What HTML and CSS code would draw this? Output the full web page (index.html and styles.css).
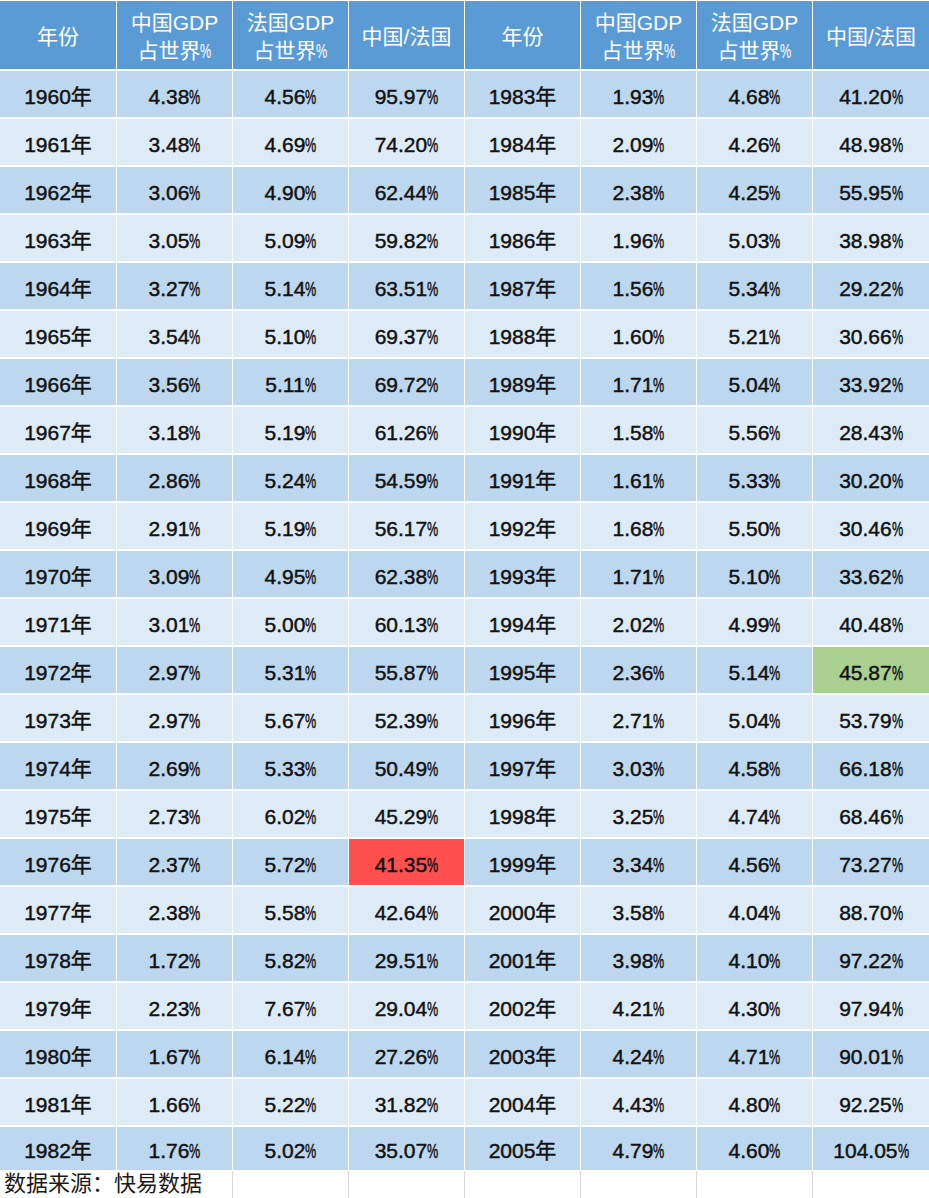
FILE: index.html
```html
<!DOCTYPE html>
<html lang="zh-CN">
<head>
<meta charset="utf-8">
<title>中国与法国GDP占世界比重</title>
<link rel="stylesheet" href="styles.css">
</head>
<body>
<div class="sheet">
  <div class="row head">
    <div class="c">年份</div>
    <div class="c"><span>中国GDP<br>占世界<span class="p">%</span></span></div>
    <div class="c"><span>法国GDP<br>占世界<span class="p">%</span></span></div>
    <div class="c">中国/法国</div>
    <div class="c">年份</div>
    <div class="c"><span>中国GDP<br>占世界<span class="p">%</span></span></div>
    <div class="c"><span>法国GDP<br>占世界<span class="p">%</span></span></div>
    <div class="c">中国/法国</div>
  </div>
  <div class="row dark"><div class="c">1960年</div><div class="c">4.38<span class="p">%</span></div><div class="c">4.56<span class="p">%</span></div><div class="c">95.97<span class="p">%</span></div><div class="c">1983年</div><div class="c">1.93<span class="p">%</span></div><div class="c">4.68<span class="p">%</span></div><div class="c">41.20<span class="p">%</span></div></div>
  <div class="row light"><div class="c">1961年</div><div class="c">3.48<span class="p">%</span></div><div class="c">4.69<span class="p">%</span></div><div class="c">74.20<span class="p">%</span></div><div class="c">1984年</div><div class="c">2.09<span class="p">%</span></div><div class="c">4.26<span class="p">%</span></div><div class="c">48.98<span class="p">%</span></div></div>
  <div class="row dark"><div class="c">1962年</div><div class="c">3.06<span class="p">%</span></div><div class="c">4.90<span class="p">%</span></div><div class="c">62.44<span class="p">%</span></div><div class="c">1985年</div><div class="c">2.38<span class="p">%</span></div><div class="c">4.25<span class="p">%</span></div><div class="c">55.95<span class="p">%</span></div></div>
  <div class="row light"><div class="c">1963年</div><div class="c">3.05<span class="p">%</span></div><div class="c">5.09<span class="p">%</span></div><div class="c">59.82<span class="p">%</span></div><div class="c">1986年</div><div class="c">1.96<span class="p">%</span></div><div class="c">5.03<span class="p">%</span></div><div class="c">38.98<span class="p">%</span></div></div>
  <div class="row dark"><div class="c">1964年</div><div class="c">3.27<span class="p">%</span></div><div class="c">5.14<span class="p">%</span></div><div class="c">63.51<span class="p">%</span></div><div class="c">1987年</div><div class="c">1.56<span class="p">%</span></div><div class="c">5.34<span class="p">%</span></div><div class="c">29.22<span class="p">%</span></div></div>
  <div class="row light"><div class="c">1965年</div><div class="c">3.54<span class="p">%</span></div><div class="c">5.10<span class="p">%</span></div><div class="c">69.37<span class="p">%</span></div><div class="c">1988年</div><div class="c">1.60<span class="p">%</span></div><div class="c">5.21<span class="p">%</span></div><div class="c">30.66<span class="p">%</span></div></div>
  <div class="row dark"><div class="c">1966年</div><div class="c">3.56<span class="p">%</span></div><div class="c">5.11<span class="p">%</span></div><div class="c">69.72<span class="p">%</span></div><div class="c">1989年</div><div class="c">1.71<span class="p">%</span></div><div class="c">5.04<span class="p">%</span></div><div class="c">33.92<span class="p">%</span></div></div>
  <div class="row light"><div class="c">1967年</div><div class="c">3.18<span class="p">%</span></div><div class="c">5.19<span class="p">%</span></div><div class="c">61.26<span class="p">%</span></div><div class="c">1990年</div><div class="c">1.58<span class="p">%</span></div><div class="c">5.56<span class="p">%</span></div><div class="c">28.43<span class="p">%</span></div></div>
  <div class="row dark"><div class="c">1968年</div><div class="c">2.86<span class="p">%</span></div><div class="c">5.24<span class="p">%</span></div><div class="c">54.59<span class="p">%</span></div><div class="c">1991年</div><div class="c">1.61<span class="p">%</span></div><div class="c">5.33<span class="p">%</span></div><div class="c">30.20<span class="p">%</span></div></div>
  <div class="row light"><div class="c">1969年</div><div class="c">2.91<span class="p">%</span></div><div class="c">5.19<span class="p">%</span></div><div class="c">56.17<span class="p">%</span></div><div class="c">1992年</div><div class="c">1.68<span class="p">%</span></div><div class="c">5.50<span class="p">%</span></div><div class="c">30.46<span class="p">%</span></div></div>
  <div class="row dark"><div class="c">1970年</div><div class="c">3.09<span class="p">%</span></div><div class="c">4.95<span class="p">%</span></div><div class="c">62.38<span class="p">%</span></div><div class="c">1993年</div><div class="c">1.71<span class="p">%</span></div><div class="c">5.10<span class="p">%</span></div><div class="c">33.62<span class="p">%</span></div></div>
  <div class="row light"><div class="c">1971年</div><div class="c">3.01<span class="p">%</span></div><div class="c">5.00<span class="p">%</span></div><div class="c">60.13<span class="p">%</span></div><div class="c">1994年</div><div class="c">2.02<span class="p">%</span></div><div class="c">4.99<span class="p">%</span></div><div class="c">40.48<span class="p">%</span></div></div>
  <div class="row dark"><div class="c">1972年</div><div class="c">2.97<span class="p">%</span></div><div class="c">5.31<span class="p">%</span></div><div class="c">55.87<span class="p">%</span></div><div class="c">1995年</div><div class="c">2.36<span class="p">%</span></div><div class="c">5.14<span class="p">%</span></div><div class="c hi-green">45.87<span class="p">%</span></div></div>
  <div class="row light"><div class="c">1973年</div><div class="c">2.97<span class="p">%</span></div><div class="c">5.67<span class="p">%</span></div><div class="c">52.39<span class="p">%</span></div><div class="c">1996年</div><div class="c">2.71<span class="p">%</span></div><div class="c">5.04<span class="p">%</span></div><div class="c">53.79<span class="p">%</span></div></div>
  <div class="row dark"><div class="c">1974年</div><div class="c">2.69<span class="p">%</span></div><div class="c">5.33<span class="p">%</span></div><div class="c">50.49<span class="p">%</span></div><div class="c">1997年</div><div class="c">3.03<span class="p">%</span></div><div class="c">4.58<span class="p">%</span></div><div class="c">66.18<span class="p">%</span></div></div>
  <div class="row light"><div class="c">1975年</div><div class="c">2.73<span class="p">%</span></div><div class="c">6.02<span class="p">%</span></div><div class="c">45.29<span class="p">%</span></div><div class="c">1998年</div><div class="c">3.25<span class="p">%</span></div><div class="c">4.74<span class="p">%</span></div><div class="c">68.46<span class="p">%</span></div></div>
  <div class="row dark"><div class="c">1976年</div><div class="c">2.37<span class="p">%</span></div><div class="c">5.72<span class="p">%</span></div><div class="c hi-red">41.35<span class="p">%</span></div><div class="c">1999年</div><div class="c">3.34<span class="p">%</span></div><div class="c">4.56<span class="p">%</span></div><div class="c">73.27<span class="p">%</span></div></div>
  <div class="row light"><div class="c">1977年</div><div class="c">2.38<span class="p">%</span></div><div class="c">5.58<span class="p">%</span></div><div class="c">42.64<span class="p">%</span></div><div class="c">2000年</div><div class="c">3.58<span class="p">%</span></div><div class="c">4.04<span class="p">%</span></div><div class="c">88.70<span class="p">%</span></div></div>
  <div class="row dark"><div class="c">1978年</div><div class="c">1.72<span class="p">%</span></div><div class="c">5.82<span class="p">%</span></div><div class="c">29.51<span class="p">%</span></div><div class="c">2001年</div><div class="c">3.98<span class="p">%</span></div><div class="c">4.10<span class="p">%</span></div><div class="c">97.22<span class="p">%</span></div></div>
  <div class="row light"><div class="c">1979年</div><div class="c">2.23<span class="p">%</span></div><div class="c">7.67<span class="p">%</span></div><div class="c">29.04<span class="p">%</span></div><div class="c">2002年</div><div class="c">4.21<span class="p">%</span></div><div class="c">4.30<span class="p">%</span></div><div class="c">97.94<span class="p">%</span></div></div>
  <div class="row dark"><div class="c">1980年</div><div class="c">1.67<span class="p">%</span></div><div class="c">6.14<span class="p">%</span></div><div class="c">27.26<span class="p">%</span></div><div class="c">2003年</div><div class="c">4.24<span class="p">%</span></div><div class="c">4.71<span class="p">%</span></div><div class="c">90.01<span class="p">%</span></div></div>
  <div class="row light"><div class="c">1981年</div><div class="c">1.66<span class="p">%</span></div><div class="c">5.22<span class="p">%</span></div><div class="c">31.82<span class="p">%</span></div><div class="c">2004年</div><div class="c">4.43<span class="p">%</span></div><div class="c">4.80<span class="p">%</span></div><div class="c">92.25<span class="p">%</span></div></div>
  <div class="row dark last"><div class="c">1982年</div><div class="c">1.76<span class="p">%</span></div><div class="c">5.02<span class="p">%</span></div><div class="c">35.07<span class="p">%</span></div><div class="c">2005年</div><div class="c">4.79<span class="p">%</span></div><div class="c">4.60<span class="p">%</span></div><div class="c">104.05<span class="p">%</span></div></div>
  <div class="row foot">
    <div class="c source">数据来源：快易数据</div>
    <div class="c"></div><div class="c"></div><div class="c"></div><div class="c"></div><div class="c"></div><div class="c"></div>
  </div>
</div>
</body>
</html>
```
FILE: styles.css
```css
html, body {
  margin: 0;
  padding: 0;
  background: #ffffff;
}
body {
  font-family: "Liberation Sans", "Noto Sans CJK SC", sans-serif;
  color: #111111;
}
.sheet {
  display: flex;
  flex-direction: column;
  row-gap: 2px;
  padding-top: 1px;
  width: 929px;
  background: #ffffff;
}
.row {
  display: grid;
  grid-template-columns: 116px repeat(6, 115px) 1fr;
  column-gap: 1px;
  height: 46px;
  background: #ffffff;
}
.c {
  display: flex;
  align-items: center;
  justify-content: center;
  box-sizing: border-box;
  padding-top: 6px;
  font-size: 21px;
  line-height: 24px;
  font-weight: normal;
  -webkit-text-stroke: 0.45px #111111;
  white-space: nowrap;
}
.p {
  display: inline-block;
  transform: scaleX(0.6);
  transform-origin: left center;
  margin-right: -0.36em;
}
.head {
  height: 68px;
}
.head .c {
  background: #5b9bd5;
  color: #ffffff;
  -webkit-text-stroke: 0;
  font-size: 21px;
  font-weight: normal;
  line-height: 28px;
  text-align: center;
  padding-top: 3px;
}
.dark .c {
  background: #bdd7ee;
}
.light .c {
  background: #ddebf7;
}
.dark .c.hi-red {
  background: #ff5050;
}
.dark .c.hi-green {
  background: #a9d08e;
}
.last {
  height: 43px;
  margin-bottom: -1px;
}
.last .c {
  padding-top: 5px;
}
.foot {
  height: 27px;
  background: #d9d9d9;
  border-bottom: 1px solid #d9d9d9;
}
.foot .c {
  background: #ffffff;
  padding-top: 0;
}
.foot .source {
  grid-column: span 2;
  justify-content: flex-start;
  align-items: flex-start;
  padding-left: 4px;
  padding-top: 1px;
  font-size: 22px;
  line-height: 24px;
  font-weight: normal;
  -webkit-text-stroke: 0;
  color: #1a1a1a;
}
```
